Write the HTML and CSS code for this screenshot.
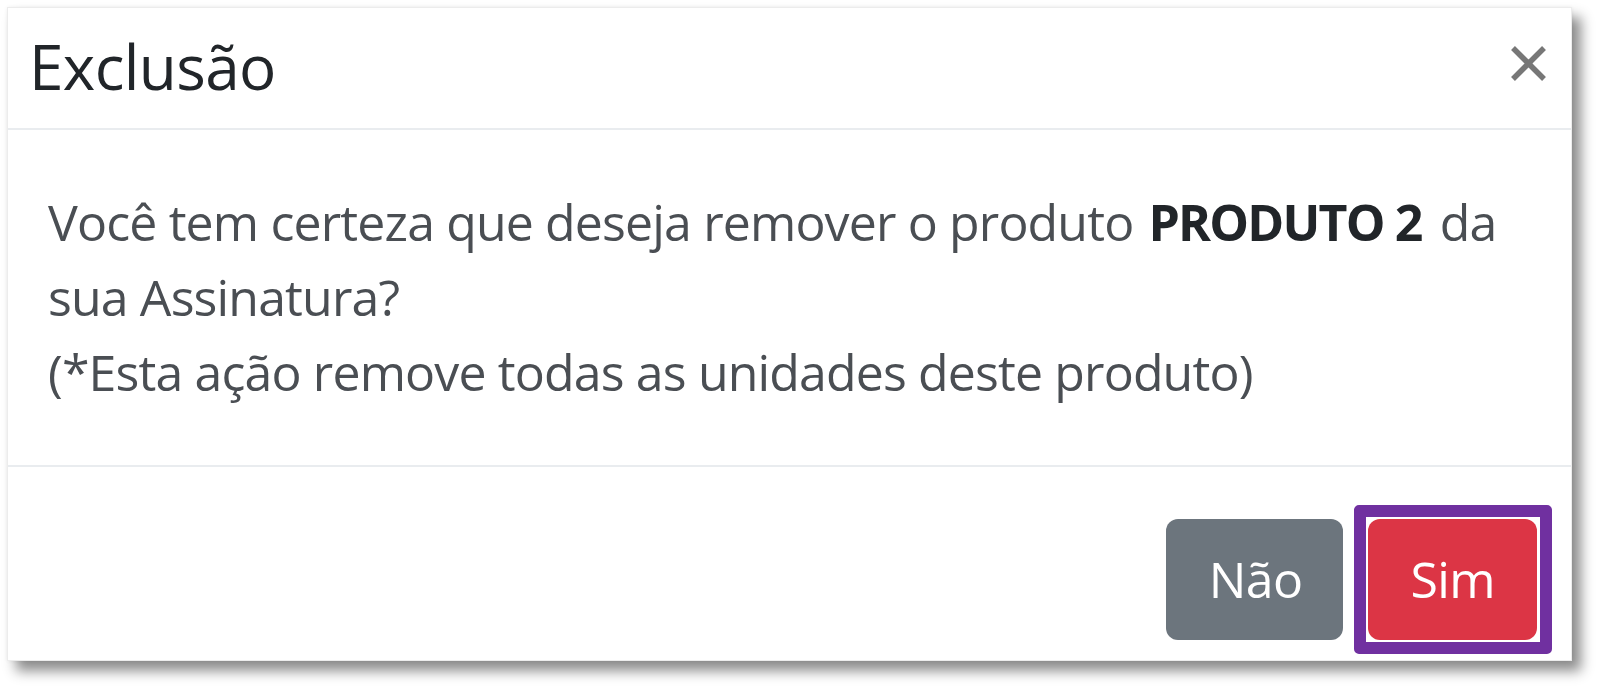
FILE: index.html
```html
<!DOCTYPE html>
<html lang="pt-BR">
<head>
<meta charset="utf-8">
<title>Exclusão</title>
<link rel="stylesheet" href="styles.css">
</head>
<body>
<div class="modal">
  <div class="modal-header">
    <h5 class="modal-title">Exclusão</h5>
    <button class="close" type="button" aria-label="Fechar">
      <svg viewBox="0 0 37 37" width="37" height="37" aria-hidden="true">
        <path d="M3 3 L34 34 M34 3 L3 34" stroke="currentColor" stroke-width="5.5" fill="none"/>
      </svg>
    </button>
  </div>
  <div class="modal-body">
    <p class="msg">Você tem certeza que deseja remover o produto <strong>PRODUTO 2</strong> da sua Assinatura?<br>(*Esta ação remove todas as unidades deste produto)</p>
  </div>
  <div class="modal-footer">
    <button class="btn btn-secondary" type="button">Não</button>
    <button class="btn btn-danger highlighted" type="button">Sim</button>
  </div>
</div>
</body>
</html>
```

FILE: styles.css
```css
html, body {
  margin: 0;
  padding: 0;
  background: #ffffff;
}

body {
  font-family: "Open Sans", "Noto Sans", "Liberation Sans", sans-serif;
  padding: 7px 0 28px 7px;
  min-height: 689px;
  box-sizing: border-box;
}

.modal {
  width: 1565px;
  box-sizing: border-box;
  background: #ffffff;
  border: 1px solid #ececec;
  box-shadow: 9px 10px 12px rgba(0, 0, 0, 0.45), 0 0 4px rgba(0, 0, 0, 0.06);
}

.modal-header {
  display: flex;
  align-items: center;
  justify-content: space-between;
  padding: 12px 24px 15px 21px;
  border-bottom: 2px solid #e9ecef;
}

.modal-title {
  margin: 0;
  font-size: 62px;
  font-weight: 400;
  line-height: 93px;
  letter-spacing: -0.6px;
  color: #212529;
}

.close {
  display: flex;
  padding: 0;
  margin: 0;
  border: 0;
  background: transparent;
  color: #777777;
  margin-top: -6px;
}

.modal-body {
  padding: 55px 30px 55px 40px;
}

.msg {
  margin: 0;
  font-size: 50px;
  line-height: 75px;
  letter-spacing: -0.85px;
  color: #4a4e53;
}

.msg strong {
  font-weight: 700;
  letter-spacing: -1.8px;
  margin: 0 6px 0 3px;
  color: #212529;
}

.modal-footer {
  display: flex;
  justify-content: flex-end;
  gap: 25px;
  padding: 52px 34px 20px 0;
  border-top: 2px solid #e9ecef;
}

.btn {
  position: relative;
  font-family: inherit;
  font-size: 50px;
  line-height: 75px;
  letter-spacing: -0.6px;
  padding: 23px 42px;
  border: 0;
  border-radius: 12px;
  color: #ffffff;
}

.btn-secondary {
  background: #6c757d;
  padding-left: 43px;
  padding-right: 41px;
}

.btn-danger {
  background: #dc3545;
}

.highlighted::after {
  content: "";
  position: absolute;
  top: -14px;
  left: -14px;
  right: -15px;
  bottom: -14px;
  border: 12px solid #7030a0;
  border-radius: 5px;
  pointer-events: none;
}
```
